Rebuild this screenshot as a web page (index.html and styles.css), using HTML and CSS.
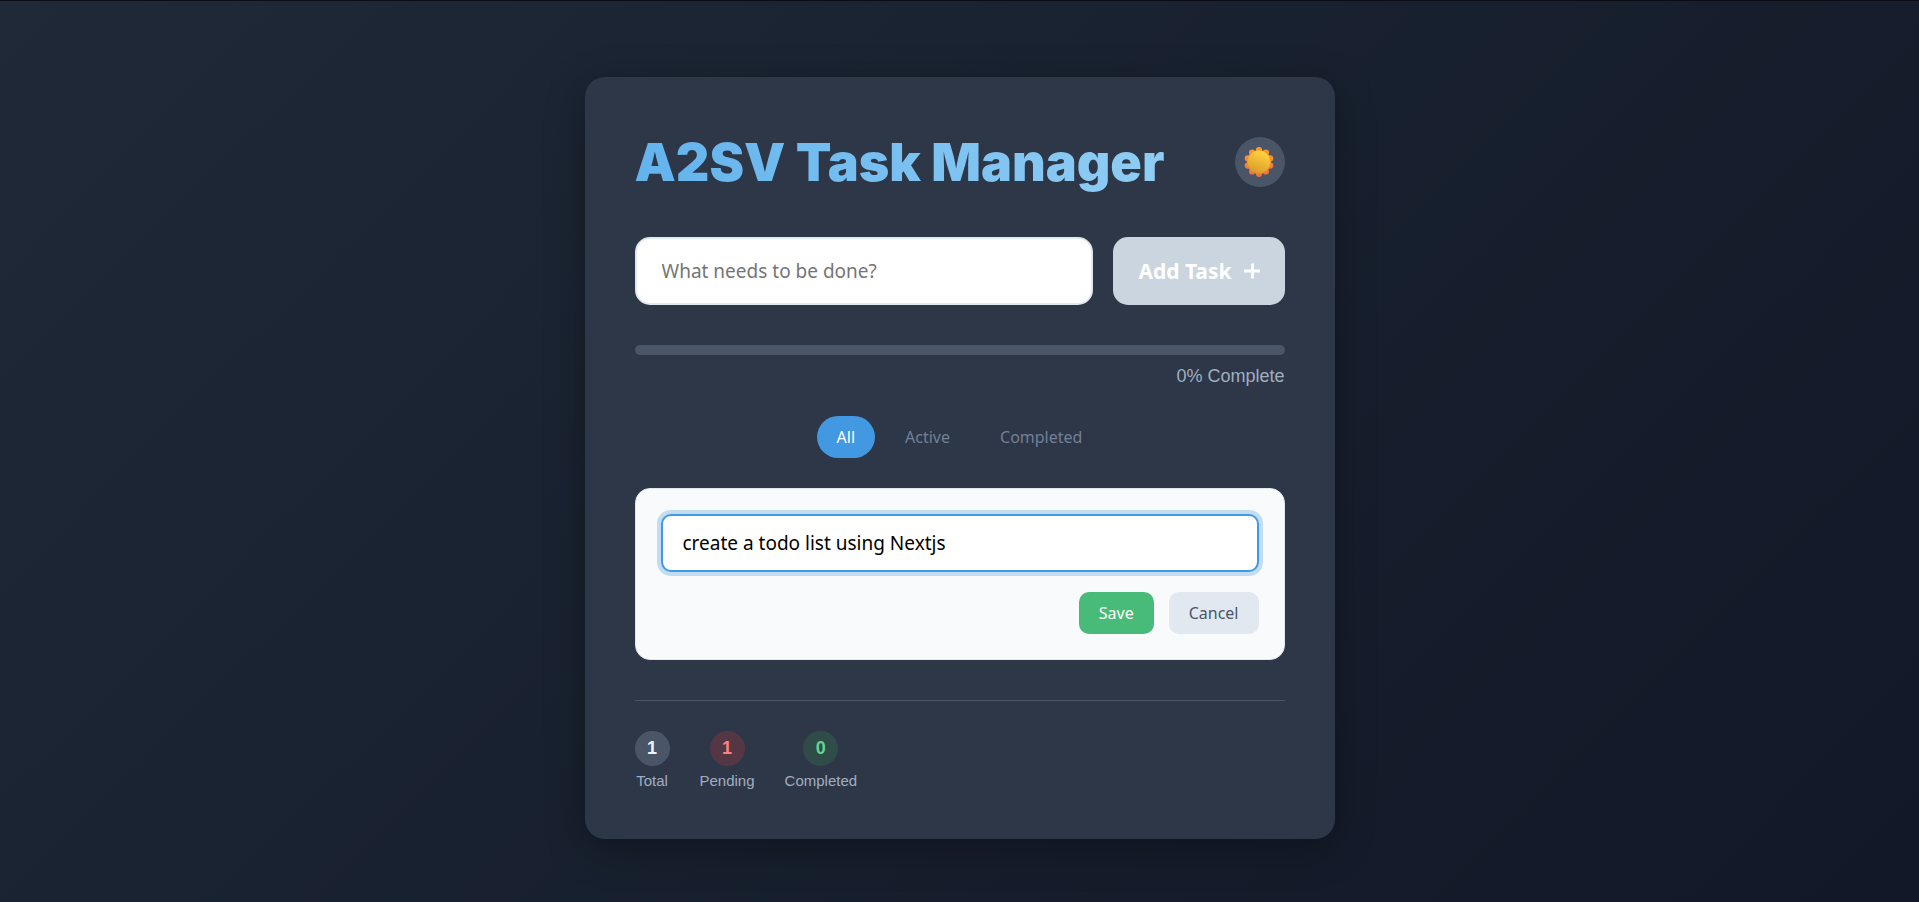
FILE: index.html
```html
<!DOCTYPE html>
<html lang="en">
<head>
<meta charset="utf-8">
<title>A2SV Task Manager</title>
<link rel="stylesheet" href="styles.css">
</head>
<body>
<main class="card">
  <header class="header">
    <h1 class="title">A2SV Task Manager</h1>
    <button class="theme-toggle" type="button" aria-label="Switch to light theme">
      <svg class="sun" viewBox="0 0 30 30" aria-hidden="true">
        <defs>
          <linearGradient id="rays" x1="0" y1="0" x2="0" y2="30" gradientUnits="userSpaceOnUse">
            <stop offset="0" stop-color="#ff9a2e"/>
            <stop offset="1" stop-color="#f0703c"/>
          </linearGradient>
          <linearGradient id="disc" x1="0.7" y1="0" x2="0.3" y2="1">
            <stop offset="0.1" stop-color="#fdd03b"/>
            <stop offset="1" stop-color="#d9982c"/>
          </linearGradient>
        </defs>
        <g fill="url(#rays)">
          <circle cx="15" cy="15" r="12"/>
          <circle cx="15" cy="3.2" r="3.1"/>
          <circle cx="21.9" cy="5.5" r="3.1"/>
          <circle cx="26.2" cy="11.4" r="3.1"/>
          <circle cx="26.2" cy="18.6" r="3.1"/>
          <circle cx="21.9" cy="24.5" r="3.1"/>
          <circle cx="15" cy="26.8" r="3.1"/>
          <circle cx="8.1" cy="24.5" r="3.1"/>
          <circle cx="3.8" cy="18.6" r="3.1"/>
          <circle cx="3.8" cy="11.4" r="3.1"/>
          <circle cx="8.1" cy="5.5" r="3.1"/>
        </g>
        <circle cx="15" cy="15" r="11.4" fill="url(#disc)"/>
      </svg>
    </button>
  </header>

  <form class="add-form">
    <input class="add-input" type="text" placeholder="What needs to be done?" aria-label="New task">
    <button class="add-button" type="button">
      <span>Add Task</span>
      <svg class="plus" viewBox="0 0 16 16" aria-hidden="true"><path d="M8.5 0.5V15.5M0 8H16" stroke="#fff" stroke-width="3" fill="none"/></svg>
    </button>
  </form>

  <section class="progress">
    <div class="progress-track"></div>
    <p class="progress-label">0% Complete</p>
  </section>

  <nav class="filters" aria-label="Filter tasks">
    <button class="filter filter-active" type="button">All</button>
    <button class="filter" type="button">Active</button>
    <button class="filter" type="button">Completed</button>
  </nav>

  <form class="edit">
    <input class="edit-input" type="text" value="create a todo list using Nextjs" aria-label="Edit task">
    <div class="edit-actions">
      <button class="action action-save" type="button">Save</button>
      <button class="action action-cancel" type="button">Cancel</button>
    </div>
  </form>

  <footer class="stats">
    <div class="stat"><span class="badge">1</span><span class="stat-label">Total</span></div>
    <div class="stat"><span class="badge badge-pending">1</span><span class="stat-label">Pending</span></div>
    <div class="stat"><span class="badge badge-completed">0</span><span class="stat-label">Completed</span></div>
  </footer>
</main>
</body>
</html>
```
FILE: styles.css
```css
* {
  box-sizing: border-box;
  margin: 0;
}

body {
  min-height: 100vh;
  padding: 76px 20px 20px;
  border-top: 1px solid #0b0d12;
  background: linear-gradient(135deg, #1f2937, #111827);
  color: #e2e8f0;
  font-family: "Liberation Sans", Arial, sans-serif;
}

button,
input {
  font-family: "Noto Sans", Tahoma, sans-serif;
}

button {
  border: 0;
}

.card {
  max-width: 750px;
  margin: 0 auto;
  padding: 50px;
  border-radius: 20px;
  background: #2d3748;
  box-shadow: 0 10px 40px rgba(0, 0, 0, 0.3);
}

.header {
  display: flex;
  align-items: center;
  justify-content: space-between;
  height: 70px;
  margin-bottom: 40px;
}

.title {
  padding-top: 2px;
  background: linear-gradient(90deg, #63b3ed, #90cdf4);
  background-clip: text;
  color: transparent;
  font-family: Inter, "Arial Black", sans-serif;
  font-size: 52px;
  font-weight: 900;
  line-height: 70px;
}

.theme-toggle {
  display: flex;
  align-items: center;
  justify-content: center;
  width: 50px;
  height: 50px;
  padding: 0 2px 0 0;
  border-radius: 50%;
  background: #4a5568;
}

.sun {
  width: 30px;
  height: 30px;
}

.add-form {
  display: flex;
  gap: 20px;
  margin-bottom: 40px;
}

.add-input {
  flex: 1;
  min-width: 0;
  height: 68px;
  padding: 0 25px;
  border: 2px solid #e2e8f0;
  border-radius: 15px;
  background: #fff;
  font-size: 19px;
}

.add-input::placeholder {
  color: #757575;
}

.add-button {
  display: flex;
  align-items: center;
  gap: 12px;
  padding: 0 25px;
  border-radius: 15px;
  background: #cbd5e0;
  color: #fff;
  font-size: 21px;
  font-weight: 700;
}

.plus {
  width: 16px;
  height: 16px;
}

.progress {
  margin-bottom: 30px;
}

.progress-track {
  height: 10px;
  margin-bottom: 11px;
  border-radius: 5px;
  background: #4a5568;
}

.progress-label {
  color: #a0aec0;
  font-size: 18px;
  line-height: 20px;
  text-align: right;
}

.filters {
  display: flex;
  justify-content: center;
  gap: 10px;
  margin-bottom: 30px;
}

.filter {
  height: 42px;
  padding: 0 20px;
  border-radius: 21px;
  background: transparent;
  color: #718096;
  font-size: 16px;
}

.filter-active {
  background: #4299e1;
  color: #fff;
}

.edit {
  padding: 25px;
  margin-bottom: 40px;
  border: 1px solid #e2e8f0;
  border-radius: 15px;
  background: #f9fafc;
}

.edit-input {
  display: block;
  width: 100%;
  height: 58px;
  padding: 0 20px;
  border: 2px solid #4299e1;
  border-radius: 10px;
  outline: 0;
  background: #fff;
  box-shadow: 0 0 0 4px rgba(66, 153, 225, 0.3);
  color: #000;
  font-size: 19px;
}

.edit-actions {
  display: flex;
  justify-content: flex-end;
  gap: 15px;
  margin-top: 20px;
}

.action {
  height: 42px;
  padding: 0 20px;
  border-radius: 10px;
  font-size: 16px;
}

.action-save {
  background: #48bb78;
  color: #fff;
}

.action-cancel {
  background: #e2e8f0;
  color: #4a5568;
}

.stats {
  display: flex;
  gap: 30px;
  padding-top: 30px;
  border-top: 1px solid #4a5568;
}

.stat {
  display: flex;
  flex-direction: column;
  align-items: center;
  gap: 6px;
}

.badge {
  width: 35px;
  border-radius: 50%;
  background: #4a5568;
  color: #ebf4ff;
  font-size: 18px;
  font-weight: 700;
  line-height: 35px;
  text-align: center;
}

.badge-pending {
  background: rgba(245, 56, 56, 0.2);
  color: #fc8181;
}

.badge-completed {
  background: rgba(56, 161, 80, 0.2);
  color: #68d391;
}

.stat-label {
  color: #a0aec0;
  font-size: 15px;
  line-height: 17px;
}
```
